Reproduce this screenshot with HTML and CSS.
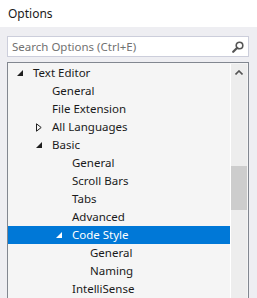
FILE: index.html
```html
<!DOCTYPE html>
<html lang="en">
<head>
  <meta charset="UTF-8">
  <title>Options</title>
  <link rel="stylesheet" href="styles.css">
</head>
<body>
  <div class="header">Options</div>

  <div class="panel">
    <div class="search">
      <span class="placeholder">Search Options (Ctrl+E)</span>
      <svg class="search-icon" width="12" height="12" viewBox="0 0 12 12">
        <circle cx="7.5" cy="4.5" r="3.3" fill="none" stroke="#555" stroke-width="1.6"/>
        <path d="M5.2 6.8 L1.2 10.8" stroke="#555" stroke-width="2.2" stroke-linecap="round"/>
      </svg>
    </div>

    <div class="tree">
      <div class="rows">
        <div class="row lvl0"><span class="exp"><svg width="6" height="6" viewBox="0 0 6 6"><path d="M6 0 L6 6 L0 6 Z" fill="#1e1e1e"/></svg></span>Text Editor</div>
        <div class="row lvl1"><span class="exp"></span>General</div>
        <div class="row lvl1"><span class="exp"></span>File Extension</div>
        <div class="row lvl1"><span class="exp"><svg width="6" height="9" viewBox="0 0 6 9"><path d="M0.5 0.8 L5.2 4.5 L0.5 8.2 Z" fill="none" stroke="#1e1e1e" stroke-width="1"/></svg></span>All Languages</div>
        <div class="row lvl1"><span class="exp"><svg width="6" height="6" viewBox="0 0 6 6"><path d="M6 0 L6 6 L0 6 Z" fill="#1e1e1e"/></svg></span>Basic</div>
        <div class="row lvl2"><span class="exp"></span>General</div>
        <div class="row lvl2"><span class="exp"></span>Scroll Bars</div>
        <div class="row lvl2"><span class="exp"></span>Tabs</div>
        <div class="row lvl2"><span class="exp"></span>Advanced</div>
        <div class="row lvl2 selected"><span class="exp"><svg width="6" height="6" viewBox="0 0 6 6"><path d="M6 0 L6 6 L0 6 Z" fill="#fff"/></svg></span>Code Style</div>
        <div class="row lvl3"><span class="exp"></span>General</div>
        <div class="row lvl3"><span class="exp"></span>Naming</div>
        <div class="row lvl2"><span class="exp"></span>IntelliSense</div>
      </div>
      <div class="scrollbar">
        <div class="arrow">
          <svg width="8" height="5" viewBox="0 0 8 5"><path d="M0.5 4.5 L4 1 L7.5 4.5" fill="none" stroke="#555" stroke-width="1.6"/></svg>
        </div>
        <div class="thumb"></div>
      </div>
    </div>
  </div>
</body>
</html>
```

FILE: styles.css
```css
html, body {
  margin: 0;
  padding: 0;
  height: 100%;
  overflow: hidden;
  font-family: "Noto Sans", sans-serif;
  font-size: 11.5px;
  color: #1a1a1a;
  background: #eeeef2;
}
.header {
  height: 27px;
  background: #fff;
  padding-left: 8px;
  line-height: 27px;
  font-size: 12px;
  box-sizing: border-box;
}
.panel {
  padding: 9px 8px 0 7px;
}
.search {
  height: 21px;
  box-sizing: border-box;
  border: 1px solid #cccedb;
  background: #fff;
  display: flex;
  align-items: center;
  justify-content: space-between;
  padding: 0 4px 0 4px;
}
.placeholder {
  color: #717171;
}
.search-icon {
  display: block;
}
.tree {
  margin-top: 5px;
  border: 1px solid #828790;
  background: #f5f5f5;
  display: flex;
  height: 235px;
  padding: 1px 1px 0 0;
}
.rows {
  flex: 1;
  overflow: hidden;
}
.row {
  height: 18px;
  line-height: 18px;
  display: flex;
  align-items: center;
  white-space: nowrap;
}
.row .exp {
  width: 19px;
  height: 18px;
  display: flex;
  align-items: center;
  padding-left: 3px;
  box-sizing: border-box;
}
.lvl0 { padding-left: 6px; }
.lvl1 { padding-left: 25px; }
.lvl2 { padding-left: 45px; }
.lvl3 { padding-left: 63px; }
.selected {
  background: #0078d7;
  color: #fff;
}
.scrollbar {
  width: 16px;
  border-left: 1px solid #fff;
  background: #ededed;
}
.arrow {
  height: 17px;
  display: flex;
  align-items: center;
  justify-content: center;
}
.thumb {
  margin-top: 85px;
  height: 44px;
  background: #cdcdcd;
}
```
